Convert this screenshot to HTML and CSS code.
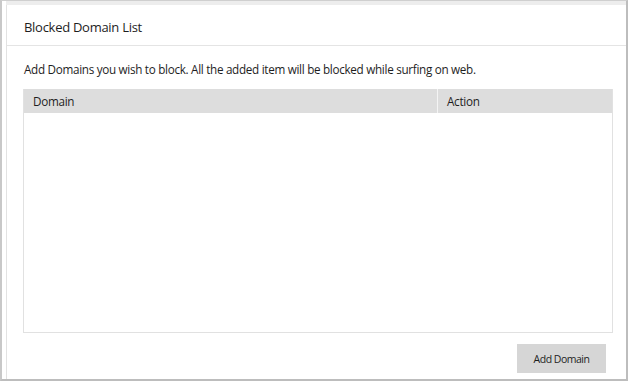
FILE: index.html
```html
<!DOCTYPE html>
<html>
<head>
<meta charset="utf-8">
<link rel="stylesheet" href="styles.css">
</head>
<body>
<div class="frame">
  <div class="topband"></div>
  <div class="panel">
    <div class="header">Blocked Domain List</div>
    <div class="content">
      <p class="desc">Add Domains you wish to block. All the added item will be blocked while surfing on web.</p>
      <div class="table">
        <div class="thead">
          <div class="th th-domain">Domain</div>
          <div class="th th-action">Action</div>
        </div>
        <div class="tbody"></div>
      </div>
      <div class="actions">
        <button class="btn">Add Domain</button>
      </div>
    </div>
  </div>
</div>
</body>
</html>
```

FILE: styles.css
```css
html, body {
  margin: 0;
  padding: 0;
  background: #ffffff;
}
body {
  font-family: "Open Sans", "Noto Sans", sans-serif;
  color: #1e1e1e;
}
.frame {
  box-sizing: border-box;
  width: 628px;
  height: 381px;
  border-left: 2px solid #c8c8c8;
  border-top: 1px solid #cfcfcf;
  border-right: 2px solid #bdbdbd;
  border-bottom: 2px solid #bdbdbd;
  display: flex;
  flex-direction: column;
}
.topband {
  height: 4px;
  margin-left: 4px;
  background: #ededed;
  flex: none;
}
.panel {
  flex: 1;
  margin-left: 4px;
  border-left: 1px solid #e2e2e2;
  display: flex;
  flex-direction: column;
}
.header {
  height: 41px;
  box-sizing: border-box;
  padding: 13px 0 0 17px;
  font-size: 13px;
  border-bottom: 1px solid #e4e4e4;
  letter-spacing: -0.28px;
}
.content {
  padding: 0 13px 0 16px;
  flex: 1;
  display: flex;
  flex-direction: column;
}
.desc {
  margin: 15px 0 0 1px;
  font-size: 11.7px;
  line-height: 17px;
  letter-spacing: -0.3px;
  height: 28px;
}
.table {
  border: 1px solid #e1e1e1;
  border-top: none;
  height: 243px;
  display: flex;
  flex-direction: column;
}
.thead {
  display: flex;
  background: #dddddd;
  height: 24px;
}
.th {
  font-size: 11.7px;
  line-height: 24px;
  letter-spacing: -0.3px;
  padding-left: 9px;
  box-sizing: border-box;
}
.th-domain {
  width: 414px;
  border-right: 1px solid #f4f4f4;
}
.th-action {
  flex: 1;
}
.tbody {
  flex: 1;
  background: #ffffff;
}
.actions {
  display: flex;
  justify-content: flex-end;
  padding-top: 11px;
  padding-right: 7px;
}
.btn {
  width: 89px;
  height: 29px;
  border: none;
  background: #d6d6d6;
  font-family: "Open Sans", "Noto Sans", sans-serif;
  font-size: 10.5px;
  color: #1e1e1e;
  letter-spacing: -0.5px;
  padding: 0;
}
```
